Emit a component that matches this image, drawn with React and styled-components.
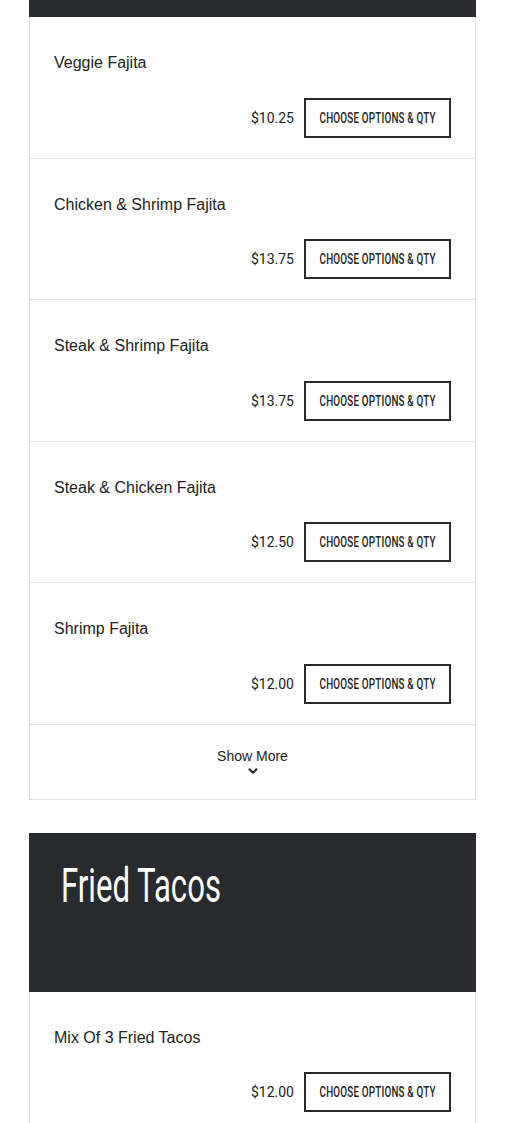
import React from "react";
import styled, { createGlobalStyle } from "styled-components";
import { ChevronDown } from "lucide-react";

const Global = createGlobalStyle`
  html, body { margin: 0; padding: 0; background: #fff; }
  body { font-family: "Liberation Sans", Arial, sans-serif; color: #222; overflow: hidden; }
`;

const Page = styled.div`
  width: 447px;
  margin: -142px auto 0 29px;
  display: flex;
  flex-direction: column;
  gap: 33px;
`;

const Section = styled.section`
  display: flex;
  flex-direction: column;
`;

const Header = styled.div`
  height: 159px;
  background: #282a2d;
  box-sizing: border-box;
  padding: 25px 32px;
`;

const Title = styled.h2`
  margin: 0;
  display: inline-block;
  font-family: Roboto, "Liberation Sans", sans-serif;
  font-weight: 400;
  font-size: 49px;
  line-height: 56px;
  color: #fff;
  white-space: nowrap;
  transform: scaleX(0.635);
  transform-origin: left center;
`;

const Card = styled.div`
  border: 1px solid #e2e2e2;
  border-top: none;
`;

const Item = styled.div`
  padding: 37px 24px 20px;
  border-bottom: 1px solid #e2e2e2;
  &:last-child { border-bottom: none; }
`;

const Name = styled.div`
  font-size: 16px;
  line-height: 18px;
  color: #222;
`;

const Row = styled.div`
  margin-top: 25.5px;
  display: flex;
  justify-content: flex-end;
  align-items: center;
  gap: 10px;
`;

const Price = styled.span`
  font-family: Roboto, "Liberation Sans", sans-serif;
  font-size: 14px;
  color: #222;
`;

const Button = styled.button`
  width: 147px;
  height: 40px;
  box-sizing: border-box;
  border: 2px solid #282a2d;
  background: #fff;
  color: #222;
  padding: 0;
  display: flex;
  align-items: center;
  justify-content: center;
  overflow: hidden;
  cursor: pointer;
`;

const ButtonLabel = styled.span`
  display: inline-block;
  white-space: nowrap;
  font-family: Roboto, "Liberation Sans", sans-serif;
  font-size: 15px;
  font-weight: 500;
  letter-spacing: 0.3px;
  text-transform: uppercase;
  transform: scaleX(0.655);
`;

const ShowMore = styled.div`
  height: 74px;
  box-sizing: border-box;
  padding-top: 23px;
  display: flex;
  flex-direction: column;
  align-items: center;
  font-size: 14px;
  line-height: 16px;
  color: #222;
`;

const fajitas = [
  ["Veggie Fajita", "$10.25"],
  ["Chicken & Shrimp Fajita", "$13.75"],
  ["Steak & Shrimp Fajita", "$13.75"],
  ["Steak & Chicken Fajita", "$12.50"],
  ["Shrimp Fajita", "$12.00"],
];

const MenuItem = ({ name, price }) => (
  <Item>
    <Name>{name}</Name>
    <Row>
      <Price>{price}</Price>
      <Button><ButtonLabel>Choose Options &amp; Qty</ButtonLabel></Button>
    </Row>
  </Item>
);

export default function App() {
  return (
    <>
      <Global />
      <Page>
        <Section>
          <Header />
          <Card>
            {fajitas.map(([n, p]) => <MenuItem key={n} name={n} price={p} />)}
            <Item as={ShowMore}>
              Show More
              <ChevronDown size={14} strokeWidth={3.5} />
            </Item>
          </Card>
        </Section>
        <Section>
          <Header><Title>Fried Tacos</Title></Header>
          <Card>
            <MenuItem name="Mix Of 3 Fried Tacos" price="$12.00" />
          </Card>
        </Section>
      </Page>
    </>
  );
}
